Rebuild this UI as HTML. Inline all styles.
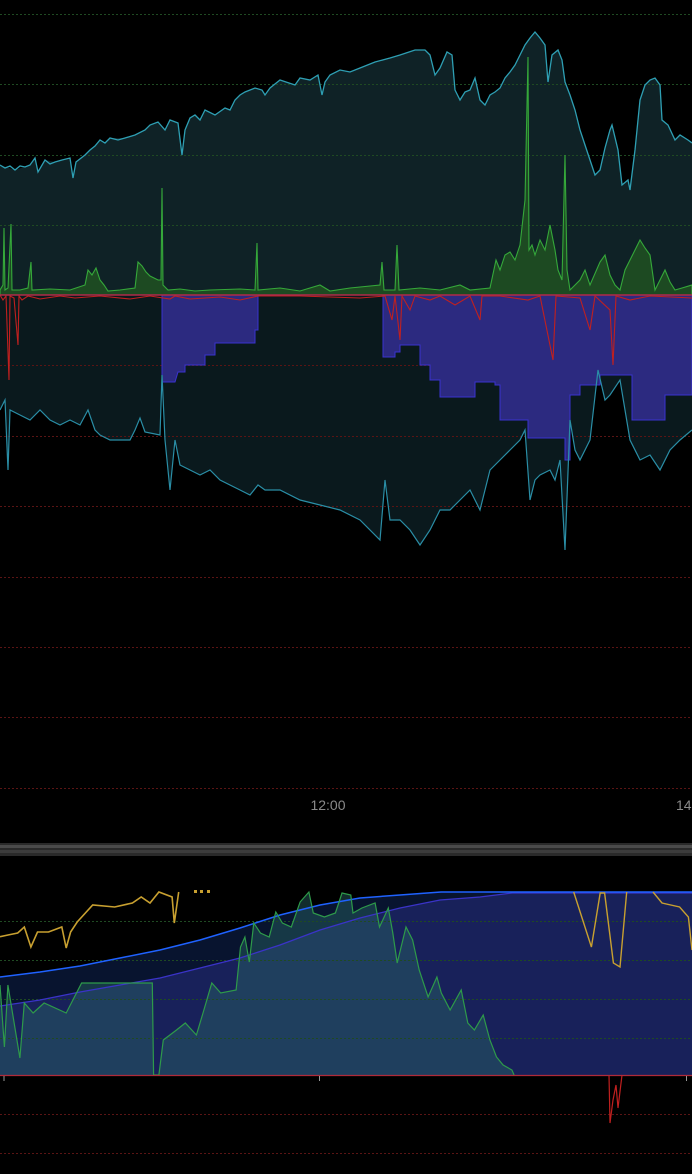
<!DOCTYPE html>
<html><head><meta charset="utf-8"><style>
html,body{margin:0;padding:0;background:#000;width:692px;height:1174px;overflow:hidden}
svg{display:block}
</style></head><body>
<svg width="692" height="1174" viewBox="0 0 692 1174" xmlns="http://www.w3.org/2000/svg">
<rect width="692" height="1174" fill="#000"/>
<!-- upper cyan area -->
<path fill="#0f2226" d="M0,295 L0,165 15,170 30,165 35,158 38,172 45,160 55,162 70,158 73,178 76,162 85,155 90,150 100,140 105,143 110,138 125,138 135,135 145,130 150,125 158,122 165,130 170,120 178,123 182,155 185,130 190,118 195,115 200,120 205,110 215,115 225,108 230,110 235,100 240,95 245,92 255,88 262,90 265,95 270,88 280,80 295,85 300,78 310,80 318,75 322,95 325,82 330,75 340,70 350,72 360,68 375,62 390,58 400,55 415,50 425,50 430,55 435,75 440,68 447,52 452,55 455,90 460,100 465,92 470,90 475,78 480,100 485,105 490,95 495,92 500,88 505,78 510,72 515,65 520,55 525,45 530,38 535,32 540,38 545,45 548,82 552,55 558,50 562,60 565,82 570,95 575,110 580,130 585,145 590,160 595,175 600,170 605,148 610,130 612,125 618,150 622,185 628,180 630,190 635,150 640,100 645,85 650,80 655,78 660,85 662,120 668,125 675,140 680,135 688,140 692,143 L692,295 Z"/>
<!-- lower cyan area -->
<path fill="#0a191d" d="M0,295 L0,410 5,400 8,470 10,410 20,415 30,420 40,410 50,420 60,425 70,420 80,425 88,410 95,430 100,435 110,440 130,440 135,430 140,418 145,432 160,435 162,375 165,440 170,490 175,440 180,465 190,470 200,475 210,470 220,480 240,490 250,495 258,485 265,490 280,490 300,500 320,505 340,510 360,520 380,540 385,480 390,520 400,520 410,530 420,545 430,530 440,510 450,510 460,500 470,490 480,510 490,470 500,460 510,450 520,440 525,430 530,500 535,480 540,475 550,470 555,480 560,460 565,550 570,420 575,450 580,460 590,440 598,370 605,400 610,395 620,380 630,440 640,460 650,455 660,470 670,450 680,440 692,430 L692,295 Z"/>
<!-- grid -->
<g stroke-width="1" stroke-dasharray="2,2">
<g stroke="#1f4a22"><line x1="0" y1="14.5" x2="692" y2="14.5"/><line x1="0" y1="84.5" x2="692" y2="84.5"/><line x1="0" y1="155.5" x2="692" y2="155.5"/><line x1="0" y1="225.5" x2="692" y2="225.5"/></g>
<g stroke="#5a1414"><line x1="0" y1="365.5" x2="692" y2="365.5"/><line x1="0" y1="436.5" x2="692" y2="436.5"/><line x1="0" y1="506.5" x2="692" y2="506.5"/><line x1="0" y1="577.5" x2="692" y2="577.5"/><line x1="0" y1="647.5" x2="692" y2="647.5"/><line x1="0" y1="717.5" x2="692" y2="717.5"/><line x1="0" y1="788.5" x2="692" y2="788.5"/></g>
</g>
<!-- blue/purple area -->
<path fill="#2c2a80" stroke="#3a33d0" stroke-width="1" d="M162,295 L162,382 175,382 178,372 185,372 185,365 205,365 205,355 215,355 215,343 255,343 255,330 258,330 258,295 Z"/>
<path fill="#2c2a80" stroke="#3a33d0" stroke-width="1" d="M383,295 L383,357 395,357 395,352 400,352 400,345 420,345 420,365 430,365 430,380 440,380 440,397 475,397 475,382 495,382 495,385 500,385 500,420 528,420 528,438 565,438 565,460 570,460 570,395 580,395 580,385 600,385 600,375 632,375 632,420 665,420 665,395 692,395 L692,295 Z"/>
<!-- cyan lines -->
<polyline fill="none" stroke="#2e9fb3" stroke-width="1.3" points="0,165 5,168 10,166 15,170 20,166 25,167 30,165 35,158 38,172 45,160 50,164 55,162 62,160 70,158 73,178 76,162 85,155 90,150 95,146 100,140 105,143 110,138 118,140 125,138 135,135 145,130 150,125 158,122 165,130 170,120 178,123 182,155 185,130 190,118 195,115 200,120 205,110 215,115 225,108 230,110 235,100 240,95 245,92 255,88 262,90 265,95 270,88 280,80 295,85 300,78 310,80 318,75 322,95 325,82 330,75 340,70 350,72 360,68 375,62 390,58 400,55 415,50 425,50 430,55 435,75 440,68 447,52 452,55 455,90 460,100 465,92 470,90 475,78 480,100 485,105 490,95 495,92 500,88 505,78 510,72 515,65 520,55 525,45 530,38 535,32 540,38 545,45 548,82 552,55 558,50 562,60 565,82 570,95 575,110 580,130 585,145 590,160 595,175 600,170 605,148 610,130 612,125 618,150 622,185 628,180 630,190 635,150 640,100 645,85 650,80 655,78 660,85 662,120 668,125 675,140 680,135 688,140 692,143"/>
<polyline fill="none" stroke="#2a8ea6" stroke-width="1.2" points="0,410 5,400 8,470 10,410 20,415 30,420 40,410 50,420 60,425 70,420 80,425 88,410 95,430 100,435 110,440 130,440 135,430 140,418 145,432 160,435 162,375 165,440 170,490 175,440 180,465 190,470 200,475 210,470 220,480 240,490 250,495 258,485 265,490 280,490 300,500 320,505 340,510 360,520 380,540 385,480 390,520 400,520 410,530 420,545 430,530 440,510 450,510 460,500 470,490 480,510 490,470 500,460 510,450 520,440 525,430 530,500 535,480 540,475 550,470 555,480 560,460 565,550 570,420 575,450 580,460 590,440 598,370 605,400 610,395 620,380 630,440 640,460 650,455 660,470 670,450 680,440 692,430"/>
<!-- green histogram -->
<path fill="#1d4a22" stroke="#35a83a" stroke-width="1.1" d="M0,295 L0,290 3,285 4,228 5,290 8,288 11,224 12,290 20,290 28,288 31,262 32,290 50,289 70,290 85,285 88,270 92,275 96,268 100,280 104,285 108,291 120,290 135,288 138,262 142,266 146,272 150,276 158,280 161,280 162,188 163,285 168,290 180,289 195,291 210,290 240,289 255,290 257,243 258,290 280,288 300,291 320,285 330,291 350,288 380,285 382,262 384,290 395,290 397,245 399,290 420,288 440,290 460,285 470,290 490,288 496,260 500,270 505,255 510,252 515,260 520,245 525,200 528,57 529,250 532,245 535,255 540,240 545,250 550,225 555,250 558,270 562,280 565,155 567,270 570,290 580,280 585,270 590,285 600,262 605,255 610,275 615,285 620,290 625,270 630,260 635,250 640,240 645,248 650,255 655,290 660,280 665,270 670,282 675,290 682,288 692,285 L692,295 Z"/>
<!-- red spikes -->
<polyline fill="none" stroke="#c0201f" stroke-width="1.1" points="0,295 3,300 6,296 9,380 10,296 14,298 18,345 19,296 22,300 28,296 40,299 60,296 75,298 100,296 130,299 150,296 170,299 175,296 190,299 220,297 240,300 258,296 300,296 360,298 385,296 392,320 395,296 400,340 402,296 410,310 415,296 430,300 440,296 455,305 470,296 480,320 482,296 500,296 528,300 540,296 553,360 556,296 580,298 590,330 595,296 610,310 613,365 616,296 630,300 650,296 692,298"/>
<line x1="0" y1="295" x2="692" y2="295" stroke="#b02a4a" stroke-width="1.5"/>
<!-- axis label -->
<text x="328" y="810" fill="#8a8a8a" font-family="'Liberation Sans',sans-serif" font-size="14" text-anchor="middle">12:00</text>
<text x="676" y="810" fill="#8a8a8a" font-family="'Liberation Sans',sans-serif" font-size="14">14</text>
<!-- separator -->
<rect x="0" y="843" width="692" height="13" fill="#2a2a2a"/>
<rect x="0" y="845" width="692" height="3" fill="#4a4a4a"/>
<rect x="0" y="850" width="692" height="3" fill="#3c3c3c"/>
<!-- lower panel fills -->
<path fill="#08142f" d="M0,1075 L0,977 40,972 80,966 120,958 160,950 200,940 240,928 280,915 320,905 360,898 400,895 441,892 692,892 692,1075 Z"/>
<path fill="#18215a" d="M0,1075 L0,1006 40,1000 80,992 120,985 160,978 200,968 240,958 280,945 320,930 360,918 400,908 440,900 480,897 512,893 692,893 692,1075 Z"/>
<path fill="rgba(40,100,100,0.45)" d="M0,1075 L0,985 4.4,1047 7.9,985 19.9,1058 24.3,1003 33.1,1013 44.1,1003 66.2,1013 81.6,983 152.3,983 153.6,1075 158.9,1075 163.3,1040 176.5,1030 185.3,1023 196.4,1035 203,1013 211.8,983 220.7,993 236.1,990 240.5,947 244.9,937 249.3,962 253.8,923 260.4,933 269.2,937 275.8,912 282.4,923 291.3,927 300.1,902 308.9,892 313.3,913 324.4,917 335.4,913 342,893 350.8,895 353,913 361.9,908 375.1,903 379.5,927 388.3,908 392.8,933 397.2,963 406,927 412.6,940 419.2,970 428.1,997 436.9,977 441.3,993 450.1,1010 461.2,990 467.8,1023 474.4,1030 483.2,1015 489.9,1040 496.5,1057 503.1,1065 511.9,1070 514.1,1075 Z"/>
<g stroke-width="1" stroke-dasharray="2,2">
<g stroke="#1f4a22"><line x1="0" y1="921.5" x2="692" y2="921.5"/><line x1="0" y1="960.5" x2="692" y2="960.5"/><line x1="0" y1="999.5" x2="692" y2="999.5"/><line x1="0" y1="1038.5" x2="692" y2="1038.5"/></g>
<g stroke="#5a1414"><line x1="0" y1="1114.5" x2="692" y2="1114.5"/><line x1="0" y1="1153.5" x2="692" y2="1153.5"/></g>
</g>
<polyline fill="none" stroke="#3a33c8" stroke-width="1.3" points="0,1006 40,1000 80,992 120,985 160,978 200,968 240,958 280,945 320,930 360,918 400,908 440,900 480,897 512,893 692,893"/>
<polyline fill="none" stroke="#1f62ff" stroke-width="1.5" points="0,977 40,972 80,966 120,958 160,950 200,940 240,928 280,915 320,905 360,898 400,895 441,892 692,892"/>
<polyline fill="none" stroke="#2e9a4a" stroke-width="1.2" points="0,985 4.4,1047 7.9,985 19.9,1058 24.3,1003 33.1,1013 44.1,1003 66.2,1013 81.6,983 152.3,983 153.6,1075 158.9,1075 163.3,1040 176.5,1030 185.3,1023 196.4,1035 203,1013 211.8,983 220.7,993 236.1,990 240.5,947 244.9,937 249.3,962 253.8,923 260.4,933 269.2,937 275.8,912 282.4,923 291.3,927 300.1,902 308.9,892 313.3,913 324.4,917 335.4,913 342,893 350.8,895 353,913 361.9,908 375.1,903 379.5,927 388.3,908 392.8,933 397.2,963 406,927 412.6,940 419.2,970 428.1,997 436.9,977 441.3,993 450.1,1010 461.2,990 467.8,1023 474.4,1030 483.2,1015 489.9,1040 496.5,1057 503.1,1065 511.9,1070 514.1,1075"/>
<polyline fill="none" stroke="#c8a030" stroke-width="1.6" points="0,936.7 8,935 17.7,933 24.3,927 30.9,947 37.5,932 48.5,932 61.8,927 66.2,948 70.6,932 77.2,922 92.7,905 114.7,907 132.4,903 141.2,897 150,903 158.9,892 172.1,897 174.3,923 178.7,892"/>
<polyline fill="none" stroke="#c8a030" stroke-width="1.4" points="573.7,892 591.4,947 600.2,893 604.6,893 613.4,963 620,967 626.7,892"/>
<polyline fill="none" stroke="#c8a030" stroke-width="1.4" points="653,892 662,903 679.6,907 688.4,917 692,950"/>
<g fill="#c8a030"><rect x="194" y="890" width="3" height="3"/><rect x="200" y="890" width="3" height="3"/><rect x="207" y="890" width="3" height="3"/></g>
<polyline fill="none" stroke="#c0201f" stroke-width="1.2" points="609,1075 610,1123 613,1100 616,1085 618,1108 622,1075"/>
<line x1="0" y1="1075.5" x2="692" y2="1075.5" stroke="#b02a3a" stroke-width="1.2"/>
<g stroke="#999" stroke-width="1"><line x1="4" y1="1076" x2="4" y2="1081"/><line x1="319.5" y1="1076" x2="319.5" y2="1081"/><line x1="686.5" y1="1076" x2="686.5" y2="1081"/></g>
</svg>
</body></html>
